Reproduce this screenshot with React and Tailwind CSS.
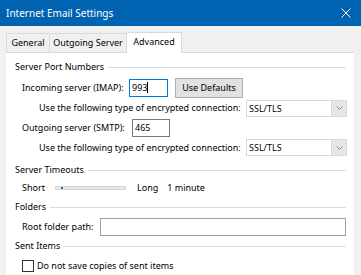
import React from "react";

const font = { fontFamily: '"Noto Sans", "Open Sans", sans-serif' };

const Heading = ({ children }) => (
  <div className="flex items-center h-4">
    <span className="whitespace-nowrap">{children}</span>
    <div className="flex-1 h-px bg-[#dcdcdc] ml-1 mr-[8px]" />
  </div>
);

const Select = () => (
  <div className="flex w-[101px] h-[17px] border border-[#d9d9d9] bg-white">
    <span className="flex-1 pl-[2px] leading-[15px]">SSL/TLS</span>
    <div className="w-[15px] h-full bg-[#e6e6e6] border-l border-[#d9d9d9] flex items-center justify-center">
      <svg width="7" height="4" viewBox="0 0 7 4">
        <path d="M0.5 0.5 L3.5 3.5 L6.5 0.5" fill="none" stroke="#8a8a8a" strokeWidth="1" />
      </svg>
    </div>
  </div>
);

export default function App() {
  return (
    <div className="w-[361px] h-[275px] bg-[#f0f0f0] overflow-hidden text-[9px] text-black" style={font}>
      <div className="h-[26px] bg-[#0063b1] flex items-center justify-between pl-[6px] pr-[10px]">
        <span className="text-white text-[10px]">Internet Email Settings</span>
        <svg width="10" height="10" viewBox="0 0 10 10">
          <path d="M0.5 0.5 L9.5 9.5 M9.5 0.5 L0.5 9.5" stroke="#fff" strokeWidth="1" />
        </svg>
      </div>
      <div className="flex items-end pl-[6px] h-[26px]">
        <div className="h-[19px] w-[44px] border border-b-0 border-[#d9d9d9] flex items-center justify-center">General</div>
        <div className="h-[19px] w-[77px] border border-b-0 border-l-0 border-[#d9d9d9] flex items-center justify-center whitespace-nowrap">Outgoing Server</div>
        <div className="h-[21px] w-[55px] bg-white border border-b-0 border-l-0 border-[#d9d9d9] flex items-start justify-center pt-[2px] -mb-px relative z-10">Advanced</div>
      </div>
      <div className="mx-[6px] w-[348px] h-[230px] bg-white border-t border-[#d9d9d9] pl-[9px] pt-[6px]">
        <Heading>Server Port Numbers</Heading>
        <div className="flex items-center pl-[7px] mt-[3px] h-[19px]">
          <span className="w-[107px]">Incoming server (IMAP):</span>
          <div className="w-[39px] h-[18px] border border-[#0078d7] flex items-center pl-[2px]">
            993<span className="w-px h-[11px] bg-black" />
          </div>
          <div className="ml-[7px] w-[68px] h-[20px] bg-[#e1e1e1] border border-[#adadad] flex items-center justify-center">Use Defaults</div>
        </div>
        <div className="flex items-center pl-[24px] mt-[2px] h-[18px]">
          <span className="w-[207px]">Use the following type of encrypted connection:</span>
          <Select />
        </div>
        <div className="flex items-center pl-[7px] mt-px h-[19px]">
          <span className="w-[110px]">Outgoing server (SMTP):</span>
          <div className="w-[38px] h-[18px] border border-[#7a7a7a] flex items-center pl-[2px]">465</div>
        </div>
        <div className="flex items-center pl-[24px] mt-px h-[19px]">
          <span className="w-[207px]">Use the following type of encrypted connection:</span>
          <Select />
        </div>
        <div className="mt-[5px]">
          <Heading>Server Timeouts</Heading>
        </div>
        <div className="flex items-center pl-[7px] mt-[2px] h-4">
          <span className="w-[33px]">Short</span>
          <div className="w-[71px] h-[4px] bg-[#e7e7e7] border border-[#d6d6d6] relative">
            <div className="absolute left-[5px] top-0 w-[2px] h-[2px] bg-[#0078d7]" />
          </div>
          <span className="ml-[11px]">Long</span>
          <span className="ml-[9px]">1 minute</span>
        </div>
        <div className="mt-[3px]">
          <Heading>Folders</Heading>
        </div>
        <div className="flex items-center pl-[7px] mt-[2px] h-[19px]">
          <span className="w-[78px]">Root folder path:</span>
          <div className="w-[246px] h-[18px] border border-[#a0a0a0]" />
        </div>
        <div className="mt-[2px]">
          <Heading>Sent Items</Heading>
        </div>
        <div className="flex items-center pl-[7px] mt-[4px] h-4">
          <div className="w-[12px] h-[12px] border border-[#333]" />
          <span className="ml-[3px]">Do not save copies of sent items</span>
        </div>
      </div>
    </div>
  );
}
